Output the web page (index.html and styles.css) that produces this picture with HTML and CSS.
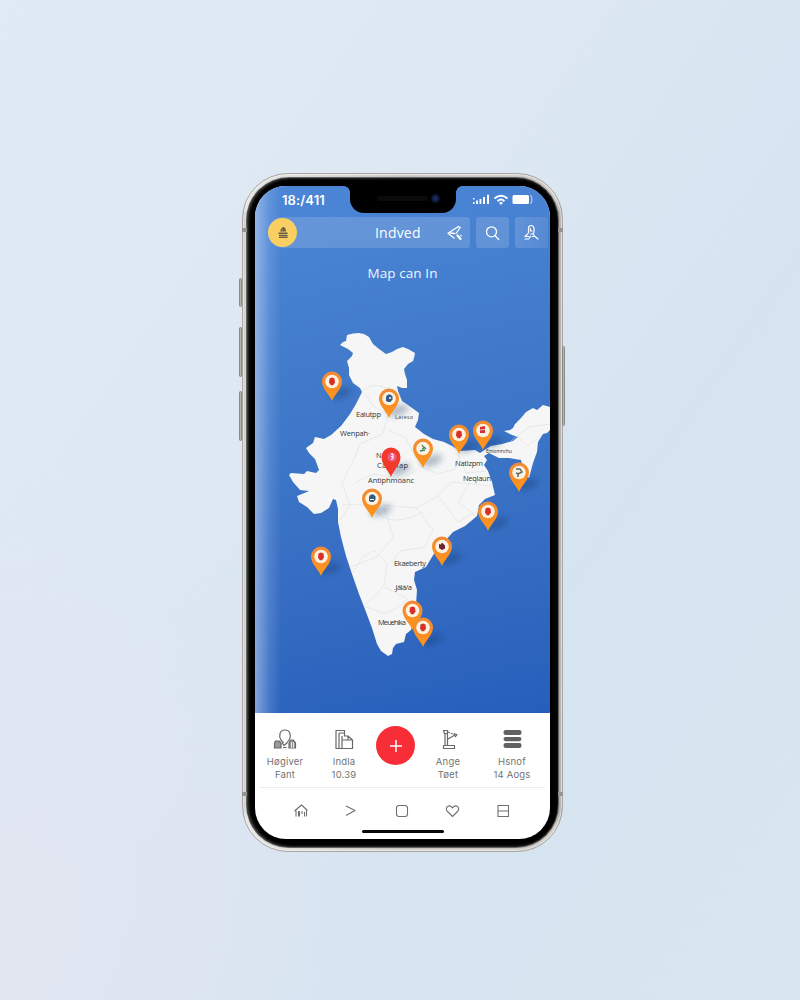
FILE: index.html
```html
<!DOCTYPE html>
<html lang="en">
<head>
<meta charset="utf-8">
<title>Map can In</title>
<link rel="stylesheet" href="styles.css">
</head>
<body>
<main class="phone">
  <i class="key key-mute"></i><i class="key key-up"></i><i class="key key-down"></i><i class="key key-power"></i>
  <i class="seam seam-tl"></i><i class="seam seam-tr"></i><i class="seam seam-bl"></i><i class="seam seam-br"></i>
  <div class="bezel">
    <div class="screen">
      <div class="notch"><i class="speaker"></i><i class="camera"></i></div>
      <section class="top">
        <header class="status">
          <span class="time">18:/411</span>
          <svg class="signals" width="62" height="12" viewBox="0 0 62 12" fill="#fff">
            <path d="M0 4h1.500v1.500H0zM0 8h1.500v2H0zM3 6.500h2V10H3zM6.500 5h1.800v5H6.500zM10 3h2v7h-2zM14 .8h2V10h-2z"/>
            <path d="M21.500 4.500Q28 -1 34.500 4.500M24.500 7.200Q28 4 31.500 7.200" fill="none" stroke="#fff" stroke-width="1.900"/>
            <path d="M26 8.600Q28 7.200 30 8.600L28 11z"/>
            <rect x="39.500" y="1" width="16.500" height="9" rx="1.500"/>
            <path d="M57 1.500q1.800 .2 1.800 2v4q0 2-1.800 2" fill="none" stroke="#cfe0f6"/>
          </svg>
        </header>
        <div class="toolbar">
          <div class="field">
            <span class="avatar">
              <svg width="12" height="14" viewBox="0 0 12 14" fill="#675e45"><path d="M3 5.500L4.500 2l2-1 1.800 1L9 5.500zM1.500 6.500h9v1.800h-9zM2 9h8.500v3H2z"/><path d="M5 3.500h1M2 10.500h8" stroke="#d7b75a" stroke-width=".7"/></svg>
            </span>
            <span class="name">Indved</span>
            <svg class="share" width="18" height="18" viewBox="0 0 18 18" fill="none" stroke="#fff" stroke-width="1.300" stroke-linecap="round" stroke-linejoin="round"><path d="M8 14L2 9.300 12.500 2.500l1.700 1L10 9.500M4.500 9l4 .5"/><path d="M11.500 11.500l3 3.500" stroke-width="2.200"/><path d="M15 11.500l.2 .2" stroke-width="1.500"/></svg>
          </div>
          <div class="tool"><svg width="18" height="18" viewBox="0 0 18 18" fill="none" stroke="#fff" stroke-width="1.300" stroke-linecap="round"><circle cx="7.500" cy="7.800" r="5"/><path d="M11.200 11.700l3.500 3.800"/></svg></div>
          <div class="tool last"><svg width="18" height="18" viewBox="0 0 18 18" fill="none" stroke="#fff" stroke-width="1.200" stroke-linecap="round" stroke-linejoin="round"><path d="M5.500 9V4q0-2 2.500-2.500Q10.500 1.500 11 4v3.500q0 2-1.500 2.500h-2M7.500 4.500v2.500h1.500M4.500 10L2 12.500h4M2 15h3.500l2-2.500M10 10l2 2.500h-3M12 12.500l3 2.500"/></svg></div>
        </div>
        <h1>Map can In</h1>
        <div class="map">
          <svg viewBox="255 290 295 423" width="295" height="423">
            <defs>
              <linearGradient id="orange" x2="0" y2="1"><stop stop-color="#f28a35"/><stop offset="1" stop-color="#ff9418"/></linearGradient>
              <filter id="soft" x="-50%" y="-80%" width="200%" height="260%"><feGaussianBlur stdDeviation="3"/></filter>
              <g id="shade"><ellipse cx="11" cy="-4" rx="11" ry="4.500" transform="rotate(-20)" fill="#102d5c" opacity=".32" filter="url(#soft)"/></g>
              <g id="pin"><path d="M0 0C-2-6-10-12-10-19.500a10 10 0 0 1 20 0C10-12 2-6 0 0z" fill="url(#orange)"/><circle cy="-19.500" r="6.800" fill="#fdf1df"/></g>
              <path id="red" d="M-2.500-22.500l2.500-1 2.500 1 .5 4-2 2.700h-2.200L-3-18.500z" fill="#d5302a"/>
              <path id="blue" d="M-3-21.500l2-2h2.500l2 2v3l-2 2.500h-2.500l-2-1z" fill="#315b88"/>
            </defs>
            <path class="land" d="M340 345L343 342 346 341 347 335 353 333.500 359 333 364 334 369 337 373 344 379 349 386 354 392 352 397 349 403 347 408 349 415 353 414 358 413 361 408 364 404 369 405 374 407 380 407 388 402 388 397 386 398 391 402 401 408 405 419 413 418 420 415 427 424 434 433 439 444 442 452 446 460 451 475 450 480 453 486 449 491 446 502 444 513 441 518 437 512 435 504 431 510 430 513 428 515 424 521 418 526 412 533 408 537 410 543 405 550 407V430L547 433 543 434 538 442 537 452 533 463 529 478 524 473 521 460 509 458 499 458 489 453 484 456 487 460 484 465 488 471 492 482 495 495 485 499 479 505 477 516 465 526 453 532 446 540 435 552 426 567 415 572 414 580 417 590 416 604 414 620 411 630 406 634 404 642 396 644 393 648 392 654 388 656 381 651 377 644 372 628 366 612 359 594 352 574 346 556 341 537 338 522 338 509 336 500 333 499 329 508 321 513 314 514 307 507 299 502 297 496 302 494 309 491 300 490 293 482 289 475 291 473 304 474 307 471 316 473 319 470 315 459 309 453 306 448 313 443 315 437 324 439 331 435 341 426 350 414 356 404 362 392 360 388 353 383 349 375 349 368 347 361 352 356 353 353 348 349z"/>
            <g class="borders">
              <path d="M362 391q10-7 17-5t18 5M365 394l8 12 15 8M388 414l-5 20-23 10-6 15-12 24 8 22-10 15M388 430l18 8 14 28 18 8 17-5 5-18M354 483l20-9 28 5 16-10M368 517l16-12 32 3 22-12 14-14M452 482l40 4M384 508l9 29-16 20-27 10M342 505q24-4 37 9t45-2M416 508l17 22-8 17-25 4-8 12M438 496l20 26 16-9M352 573l12-17 10-5 13 12-3 23-20 20M384 587l24 12M366 607l18 6 12-4 12-10M458 453l8 20 20-2M470 482l-12 20 18 14M518 437l9 9 16-12M511 441l18-14 21-3"/>
            </g>
            <g class="labels">
              <text x="356" y="417" textLength="25">Ealutpp</text><text class="tiny" x="395" y="418.500" textLength="18">Lateso</text>
              <text x="340" y="436" textLength="30">Wenpah·</text><text x="376" y="458" textLength="12">Na</text>
              <text x="377" y="467.500" textLength="31">Catonap</text><text x="368" y="483" textLength="46">Antiphmoanc</text>
              <text x="455" y="466" textLength="28">Natlzpm</text><text x="463" y="481" textLength="28">Neqlaun</text>
              <text class="tiny" x="486" y="453" textLength="26">Emomnchu</text>
              <text x="394" y="565.500" textLength="32">Ekaeberty</text><text x="394" y="590" textLength="18">.Jálá/a</text><text x="378" y="625" textLength="28">Meuehika</text>
            </g>
            <g transform="translate(332 401)"><use href="#shade"/><use href="#pin"/><use href="#red"/></g>
            <g transform="translate(389 418)"><use href="#shade"/><use href="#pin"/><use href="#blue"/><circle cx="1" cy="-20" r="1" fill="#fff"/></g>
            <g transform="translate(423 468)"><use href="#shade"/><use href="#pin"/><path d="M-1-23l2 3-2 1M-3-17l5-1M1-21l2 2" stroke="#36846f" stroke-width="1.300" fill="none"/></g>
            <g transform="translate(459 454)"><use href="#shade"/><use href="#pin"/><use href="#red"/></g>
            <g transform="translate(483 450)"><use href="#shade"/><use href="#pin"/><path d="M-3-23l5-1v7h-5z" fill="#cf2e30"/><path d="M-3-20l5-.5" stroke="#fff" stroke-width=".7"/></g>
            <g transform="translate(519 492)"><use href="#shade"/><use href="#pin"/><path d="M-3-23h4l2 3-4 2v3M-3-19l3 1" fill="none" stroke="#596c70" stroke-width="1.500"/></g>
            <g transform="translate(488 531)"><use href="#shade"/><use href="#pin"/><use href="#red"/></g>
            <g transform="translate(372 518)"><use href="#shade"/><use href="#pin"/><use href="#blue"/><path d="M-2-18.500h4" stroke="#fff"/></g>
            <g transform="translate(321 576)"><use href="#shade"/><use href="#pin"/><use href="#red"/></g>
            <g transform="translate(442 566)"><use href="#shade"/><use href="#pin"/><path d="M-3-22l2 .5 1-2 3 3v3l-3 1.500-3-2z" fill="#6b2534"/></g>
            <g transform="translate(412.500 630)"><use href="#pin"/><use href="#red"/></g>
            <g transform="translate(423 647)"><use href="#shade"/><use href="#pin"/><use href="#red"/></g>
            <g transform="translate(391 477)"><use href="#shade"/><path d="M0 0C-2-6-9.500-12-9.500-20a9.500 9.500 0 0 1 19 0C9.500-12 2-6 0 0z" fill="#f23a2b"/><circle cx="1" cy="-20" r="4.500" fill="#e8608a"/><path d="M0-23h2v5H0M0-20.500h2" fill="none" stroke="#fff"/></g>
          </svg>
        </div>
      </section>
      <nav class="actions">
        <div class="action">
          <svg width="26" height="24" viewBox="0 0 26 24" fill="none" stroke="#686868" stroke-width="1.200" stroke-linejoin="round"><path d="M9 12Q7 9 8 5.500 9 2 13 2t5 3.500q1 3.500-1 6.500M9 12l2.500 3M17 12l-2 2.500M10 15l2 2.500 3.500-3M11 19.500h3.500"/><path d="M3.500 13H7l2 2v5H2.500v-5zM18.500 12H21l2.500 3v5H17v-5z" fill="#999"/><path d="M19.500 14v6M21.500 14v6" stroke="#f2f2f2" stroke-width=".8"/></svg>
          <span>Høgiver<br>Fant</span>
        </div>
        <div class="action">
          <svg width="26" height="24" viewBox="0 0 26 24" fill="none" stroke="#686868" stroke-width="1.200" stroke-linejoin="round"><path d="M5 2.500h8.500V8H17l4.500 4v8.500H5zM8 5h5.500M8 5v15.500M11 8v12.500M11 12h6M17 8v4h4.500"/></svg>
          <span>Indla<br>10.39</span>
        </div>
        <div class="add"><svg width="14" height="14" viewBox="0 0 14 14"><path d="M7 1v12M1 7h12" stroke="#fff" stroke-width="1.500"/></svg></div>
        <div class="action">
          <svg width="26" height="24" viewBox="0 0 26 24" fill="none" stroke="#686868" stroke-width="1.200" stroke-linejoin="round"><path d="M8.500 2.500h4v3h-3zM10 5.500v11.500M12.500 4v13M13 11l7-4M19 5.500l3 1.200-2 2.300"/><path d="M13 4l7 3" stroke-dasharray="2 1"/><path d="M8.500 17.500h11v3h-11z"/></svg>
          <span>Ange<br>Tøet</span>
        </div>
        <div class="action">
          <svg width="26" height="24" viewBox="0 0 26 24" fill="#616161"><rect x="4.500" y="2" width="18" height="5" rx="2.200"/><rect x="4.500" y="9" width="18" height="4.200" rx="2.100"/><rect x="4.500" y="15" width="18" height="5" rx="2.200"/></svg>
          <span>Hsnof<br>14 Aogs</span>
        </div>
      </nav>
      <nav class="tabs">
        <svg width="16" height="16" viewBox="0 0 16 16"><path d="M1.500 8L8.500 2l6 5.500M3 7.500v6M5.500 13.500V8.500h1v5M9 8v3M11.500 9v4.500M13.500 7.500v6"/></svg>
        <svg width="16" height="16" viewBox="0 0 16 16"><path d="M2 3L11 7.500 2 12.500"/></svg>
        <svg width="16" height="16" viewBox="0 0 16 16"><rect x="2.500" y="2.500" width="11" height="11" rx="2.500"/></svg>
        <svg width="16" height="16" viewBox="0 0 16 16"><path d="M7.500 13.500L2.500 8.500Q.3 6 2.300 3.600 5 1.800 7.500 4.800q2.500-3 5.200-1.200Q14.700 6 12.500 8.500z"/></svg>
        <svg width="16" height="16" viewBox="0 0 16 16"><path d="M3 2.500h10.500v11H3zM3 8h10.500"/></svg>
      </nav>
      <div class="home"></div>
    </div>
  </div>
</main>
</body>
</html>
```

FILE: styles.css
```css
* { box-sizing: border-box; }
body {
  margin: 0;
  height: 1000px;
  overflow: hidden;
  padding: 173px 0 0 242px;
  font-family: Inter, "Open Sans", sans-serif;
  background: radial-gradient(ellipse at 0% 92%, #e2e6f1 0, rgba(226,230,241,0) 35%), linear-gradient(125deg, #e0eaf4 0%, #dde8f3 35%, #d6e4f1 65%, #d8e6f1 100%);
}
.phone {
  position: relative;
  width: 321px;
  height: 679px;
  padding: 4px;
  border-radius: 46px;
  background: linear-gradient(90deg, #a6a8a8, #e4e5e4 1%, #c3c2bf 50%, #c9c5c1 98%, #96928f);
  border: 1px solid #aaa7a3;
  box-shadow: inset 0 0 2px 1px #f3f3f1;
}
.bezel {
  height: 100%;
  padding: 8px;
  border-radius: 42px;
  background: #000;
  box-shadow: inset 1px 0 3px #56585a, 0 0 0 1px #64625e;
}
.screen {
  position: relative;
  display: flex;
  flex-direction: column;
  height: 100%;
  border-radius: 31px;
  overflow: hidden;
  background: #fff;
}
.top {
  height: 527px;
  flex: none;
  background: linear-gradient(90deg, rgba(218,230,250,.5), rgba(210,225,250,.15) 5%, transparent 9%), linear-gradient(168deg, #4c86d6 0%, #4079ca 38%, #356cc2 72%, #265fbb 100%);
}
.status {
  height: 31px;
  padding: 8px 15px 0 27px;
  display: flex;
  justify-content: space-between;
  color: #fff;
}
.time { font-size: 13px; line-height: 13px; font-weight: 600; letter-spacing: .1px; }
.toolbar { display: flex; gap: 6px; height: 31px; padding-left: 13px; }
.field {
  width: 202px;
  display: flex;
  align-items: center;
  border-radius: 15px 3px 3px 15px;
  background: rgba(255,255,255,.15);
  color: #fff;
}
.avatar {
  width: 29px;
  height: 29px;
  border-radius: 50%;
  background: #f8cf60;
  display: grid;
  place-items: center;
}
.name { margin-left: 78px; width: 71px; font: 400 14px/18px "Open Sans", sans-serif; letter-spacing: .2px; }
.tool { width: 33px; display: grid; place-items: center; border-radius: 3px; background: rgba(255,255,255,.15); }
.last { background: linear-gradient(90deg, rgba(255,255,255,.15), rgba(255,255,255,.08)); }
.tool svg { display: block; }
h1 {
  margin: 0;
  height: 42px;
  padding-top: 17px;
  font: 400 13.500px/17px "Open Sans", sans-serif;
  letter-spacing: .1px;
  color: #eff6ff;
  text-align: center;
}
.map svg { display: block; }
.land { fill: #f5f6f5; }
.borders { fill: none; stroke: #d9dcda; stroke-width: .7; stroke-linejoin: round; opacity: .7; }
.labels { font: 500 7.500px "Open Sans", sans-serif; fill: #343638; }
.tiny { font-size: 5px; }
.actions {
  height: 75px;
  flex: none;
  margin: 0 5px;
  border-bottom: 1px solid #ececec;
  display: flex;
  padding: 15px 1px 0 0;
}
.action { width: 58px; display: flex; flex-direction: column; align-items: center; color: #737373; font-size: 9.500px; line-height: 13px; letter-spacing: .2px; text-align: center; }
.action:first-child { width: 50px; }
.action span { margin-top: 3px; white-space: nowrap; }
.action:nth-child(2) { width: 68px; }
.action:nth-child(5) { margin-left: 6px; }
.add { width: 39px; height: 39px; margin: -2px 4px 0 -2px; border-radius: 50%; background: #f72e38; display: grid; place-items: center; flex: none; }
.tabs { display: flex; justify-content: space-between; padding: 15px 39px 0 38px; }
.tabs svg { fill: none; stroke: #707070; stroke-width: 1.100; stroke-linejoin: round; }
.home { width: 82px; height: 3px; border-radius: 2px; background: #080808; margin: 11px 0 0 107px; }
.notch {
  position: absolute;
  left: 95px;
  top: -2px;
  width: 106px;
  height: 29px;
  border-radius: 0 0 14px 14px;
  background: #000;
}
.notch::before, .notch::after { content: ""; position: absolute; top: 2px; width: 6px; height: 6px; }
.notch::before { left: -6px; background: radial-gradient(circle at 0 100%, transparent 5.500px, #000 6px); }
.notch::after { right: -6px; background: radial-gradient(circle at 100% 100%, transparent 5.500px, #000 6px); }
.speaker { position: absolute; left: 27px; top: 12px; width: 51px; height: 5px; border-radius: 3px; background: #0b0b0e; }
.camera { position: absolute; right: 16px; top: 10px; width: 9px; height: 9px; border-radius: 50%; background: radial-gradient(#193475, #090d20 70%); }
.key { position: absolute; width: 3px; border-radius: 2px; background: #b8b3ae; border: 1px solid #8c8a87; }
.key-mute { left: -4px; top: 104px; height: 29px; }
.key-up { left: -4px; top: 153px; height: 50px; }
.key-down { left: -4px; top: 217px; height: 50px; }
.key-power { right: -3px; top: 172px; height: 80px; }
.seam { position: absolute; width: 5px; height: 4px; background: #96948f; }
.seam-tl { left: -1px; top: 54px; }
.seam-tr { right: -1px; top: 54px; }
.seam-bl { left: -1px; top: 618px; }
.seam-br { right: -1px; top: 618px; }
```
